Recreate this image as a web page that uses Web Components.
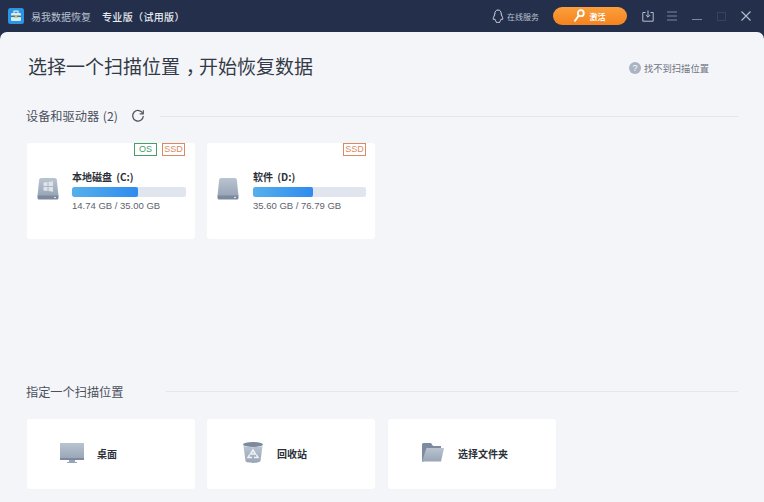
<!DOCTYPE html>
<html lang="zh"><head><meta charset="utf-8">
<style>
html,body{margin:0;padding:0;width:764px;height:502px;overflow:hidden;background:#232f4b;font-family:"Noto Sans CJK SC","Liberation Sans",sans-serif}
</style></head><body>
<app-window>
<title-bar slot="bar"></title-bar>
<page-head></page-head>
<section-head style="margin-top:30px" label="设备和驱动器 (2)" refresh></section-head>
<div style="display:flex;gap:12px;margin-top:19px">
<drive-card name="本地磁盘 (C:)" size="14.74 GB / 35.00 GB" pct="58" os win></drive-card>
<drive-card name="软件 (D:)" size="35.60 GB / 76.79 GB" pct="53" style="padding-left:46px"></drive-card>
</div>
<section-head style="margin-top:145px" label="指定一个扫描位置"></section-head>
<div style="display:flex;gap:12px;margin-top:19px">
<place-card icon="desk" label="桌面"></place-card>
<place-card icon="bin" label="回收站"></place-card>
<place-card icon="folder" label="选择文件夹" style="margin-left:1px"></place-card>
</div>
</app-window>
<script>
function el(name,html){customElements.define(name,class extends HTMLElement{connectedCallback(){if(this.shadowRoot)return;const s=this.attachShadow({mode:'open'});s.innerHTML=typeof html==='function'?html(this):html;}});}
const grad=`<linearGradient id="g" x1="0" y1="0" x2="0" y2="1"><stop offset="0" stop-color="#bac4d1"/><stop offset="1" stop-color="#98a5b6"/></linearGradient>`;
el('app-window',`<style>:host{display:flex;flex-direction:column;width:764px;height:502px}
.m{flex:1;background:#f4f5f9;border-radius:7px 7px 0 0;padding:0 26px 0 27px;min-height:0}</style>
<slot name="bar"></slot><div class="m"><slot></slot></div>`);
el('title-bar',`<style>:host{display:flex;align-items:center;height:32px;background:#232f4b;color:#cfd5e0;font-size:10px;flex:none}
.logo{margin-left:8px;margin-right:7px;display:block}
.a{color:#b9c1cf;width:60px;white-space:nowrap}.b{color:#e8ebf1;font-weight:500;margin-left:11px;white-space:nowrap;letter-spacing:.35px}
.p{font-family:"Noto Sans CJK TC",sans-serif}
.sp{flex:1}.q{display:block;margin-right:3px}.s{font-size:8px;color:#b9c1cf;white-space:nowrap}
.btn{margin-left:14px;width:74px;height:18px;border-radius:9px;background:linear-gradient(#fb9f3c,#f5831f);display:flex;align-items:center;justify-content:center;gap:5px;color:#fff;font-size:8px;font-weight:700;box-sizing:border-box;padding-right:2px}
.ic{display:flex;align-items:center;margin-left:15px;margin-right:13px;gap:15px}svg{display:block}</style>
<svg class="logo" width="16" height="16" viewBox="0 0 16 16"><rect width="16" height="16" rx="2.5" fill="#2f93e4"/><rect x="3" y="5" width="10" height="8" rx="1" fill="#d4ecf4"/><path d="M6 5V3.2h4V5" fill="none" stroke="#d4ecf4" stroke-width="1.2"/><rect x="3" y="7.500" width="10" height="1.600" fill="#1f7fb0"/><rect x="6.800" y="7" width="2.400" height="3" fill="#e6b64a"/></svg>
<span class="a">易我数据恢复</span><span class="b">专业版<span class="p">（</span>试用版<span class="p">）</span></span>
<span class="sp"></span>
<svg class="q" width="12" height="14" viewBox="0 0 12 14"><path d="M6 1C3.800 1 2.800 2.800 2.800 5 2.800 6.300 1.200 8 1.200 9.800c0 1 .6 1 1.500.2.3 1 .9 1.700 1.600 2.200-.8.500-.5 1.300.6 1.300.8 0 1-.3 1.100-.5.100.2.300.5 1.100.5 1.100 0 1.400-.8.600-1.300.7-.5 1.300-1.200 1.600-2.200.9.800 1.500.8 1.500-.2C10.800 8 9.200 6.300 9.200 5 9.200 2.800 8.200 1 6 1z" fill="none" stroke="#d5dae4" stroke-width="1"/></svg>
<span class="s">在线服务</span>
<div class="btn"><svg width="12" height="14" viewBox="0 0 12 14"><circle cx="7.800" cy="4.200" r="3" fill="none" stroke="#fff" stroke-width="1.800"/><path d="M5.800 6.500 1.500 12.500" stroke="#fff" stroke-width="2"/></svg><span>激活</span></div>
<div class="ic">
<svg width="12" height="12" viewBox="0 0 12 12" fill="none" stroke="#b7bfcc" style="margin-right:-2px"><path d="M3.500 2.500H.8v8.700h10.400V2.500H8.500M6 .5v6.500M3.800 5 6 7.200 8.200 5"/></svg>
<svg width="10" height="10" viewBox="0 0 10 10" stroke="#7f899c"><path d="M0 1h10M0 5h10M0 9h10"/></svg>
<svg width="10" height="10" viewBox="0 0 10 10" stroke="#7f899c"><path d="M0 8.500h10"/></svg>
<svg width="9" height="9" viewBox="0 0 9 9" fill="none" stroke="#38435b"><rect x=".5" y=".5" width="8" height="8"/></svg>
<svg width="10" height="10" viewBox="0 0 10 10" stroke="#b7bfcc" stroke-width="1.100"><path d="M.5.500l9 9M9.500.500l-9 9"/></svg>
</div>`);
el('page-head',`<style>:host{display:flex;align-items:center;height:24px;margin-top:22px;padding-left:1px;color:#333a46}
h1{margin:0;font-size:19px;font-weight:400;line-height:24px;flex:1;white-space:nowrap}
.c{margin-left:.3em;letter-spacing:-.3em}
.h{display:flex;align-items:center;gap:3px;font-size:9.300px;color:#6d7480;margin-right:29px;margin-top:4px}svg{display:block}</style>
<h1>选择一个扫描位置<span class="c">，</span>开始恢复数据</h1>
<div class="h"><svg width="12" height="12" viewBox="0 0 12 12"><circle cx="6" cy="6" r="6" fill="#a9b3c3"/><text x="6" y="9" text-anchor="middle" font-size="9" fill="#fff" font-family="Liberation Sans">?</text></svg><span>找不到扫描位置</span></div>`);
el('section-head',h=>`<style>:host{display:flex;align-items:center;height:16px;color:#4a505b;font-size:12.200px;word-spacing:1px;margin-left:-1px}
span{white-space:nowrap}i{flex:1;height:1px;background:#e3e6ec;margin-left:${h.hasAttribute('refresh')?'15px':'42px'};margin-bottom:${h.hasAttribute('refresh')?'0':'2px'}}svg{display:block;margin-left:13px}</style>
<span>${h.getAttribute('label')}</span>${h.hasAttribute('refresh')?`<svg width="14" height="14" viewBox="0 0 14 14" fill="none" stroke="#50565f" stroke-width="1.300"><path d="M11.800 4.500A5.300 5.300 0 1 0 12.300 7"/><path d="M12.300 1.200v3.600H8.700" stroke-width="1.200"/></svg>`:''}<i></i>`);
el('drive-card',h=>`<style>:host{display:block;position:relative;width:168px;height:96px;background:#fff;border-radius:3px;box-sizing:border-box;padding:27px 9px 0 45px;flex:none}
.n{font-size:10px;font-weight:700;color:#2a2f38;line-height:14px;white-space:nowrap;word-spacing:2px}
.bar{height:10px;background:#e1e6ee;border-radius:2px;margin-top:3px;overflow:hidden}.f{height:100%;width:${h.getAttribute('pct')}%;background:linear-gradient(90deg,#55b0ec,#2f8bee);border-radius:2px}
.s{font-size:9.500px;color:#5c626d;line-height:14px;margin-top:2px;font-family:"Liberation Sans","Noto Sans CJK SC",sans-serif;white-space:nowrap}
.tags{position:absolute;top:0;right:${h.hasAttribute('win')?10:9}px;display:flex;gap:5px}
.t{font:9px/11px "Liberation Sans",sans-serif;width:21px;text-align:center;height:11px;border:1px solid;display:block}
.os{color:#46a067;border-color:#46a067}.ssd{color:#d98a63;border-color:#d98a63}
svg{position:absolute;left:10px;top:35px}</style>
<svg width="22" height="22" viewBox="0 0 22 22"><defs>${grad}</defs><path d="M4 0h14q1.500 0 1.800 1.500L21.500 18H.5L2.200 1.500Q2.500 0 4 0z" fill="url(#g)"/><path d="M.5 17.500h21V20a1.500 1.500 0 0 1-1.500 1.500H2A1.500 1.500 0 0 1 .5 20z" fill="#7d8a9e"/><circle cx="18" cy="19.500" r=".8" fill="#fff"/>${h.hasAttribute('win')?'<path d="M6.500 4.500 10.500 4v4h-4zM11.500 3.900 16 3.300V8h-4.500zM6.500 9h4v4l-4-.5zM11.500 9H16v4.700l-4.500-.6z" fill="#dfe4ea"/>':''}</svg>
<div class="tags">${h.hasAttribute('os')?'<span class="t os">OS</span>':''}<span class="t ssd">SSD</span></div>
<div class="n">${h.getAttribute('name')}</div><div class="bar"><div class="f"></div></div><div class="s">${h.getAttribute('size')}</div>`);
const icons={desk:[`<svg width="24" height="20" viewBox="0 0 24 20"><defs>${grad}</defs><rect width="24" height="16" fill="url(#g)"/><rect y="15" width="24" height="2" fill="#7d8a9e"/><rect x="9" y="17" width="6" height="2" fill="#98a5b6"/><rect x="7" y="19" width="10" height="1" fill="#98a5b6"/></svg>`,33,-3],
bin:[`<svg width="20" height="21" viewBox="0 0 20 21"><defs>${grad}</defs><ellipse cx="10" cy="2.500" rx="10" ry="2.500" fill="#7d8a9e"/><path d="M.5 4C4 5.500 16 5.500 19.500 4L17.500 19c-1 2.500-14 2.500-15 0z" fill="url(#g)"/><path d="M10 8l2.500 4H7.500zM6.500 13 5 15.500h4M13.500 13 15 15.500h-4" fill="none" stroke="#eef1f5" stroke-width="1.500"/></svg>`,36,-3],
folder:[`<svg width="22" height="19" viewBox="0 0 22 19"><defs>${grad}</defs><path d="M0 1.500A1.500 1.500 0 0 1 1.500 0H9l2 3h8v3H5L2 18.500H0z" fill="#7d8ba0"/><path d="M4.500 5H22l-3 13.500H0z" fill="url(#g)"/></svg>`,34,-3]};
el('place-card',h=>{const k=h.getAttribute('icon');const [svg,l,t]=icons[k];return `<style>:host{display:flex;align-items:center;width:168px;height:70px;background:#fff;border-radius:3px;box-sizing:border-box;padding-left:${l}px;flex:none}
span{font-size:10px;font-weight:700;color:#2a2f38;margin-left:${k==='desk'?13:k==='bin'?14:14}px;margin-top:-2px;white-space:nowrap}svg{display:block;margin-top:${t}px}</style>${svg}<span>${h.getAttribute('label')}</span>`});
</script>
</body></html>
